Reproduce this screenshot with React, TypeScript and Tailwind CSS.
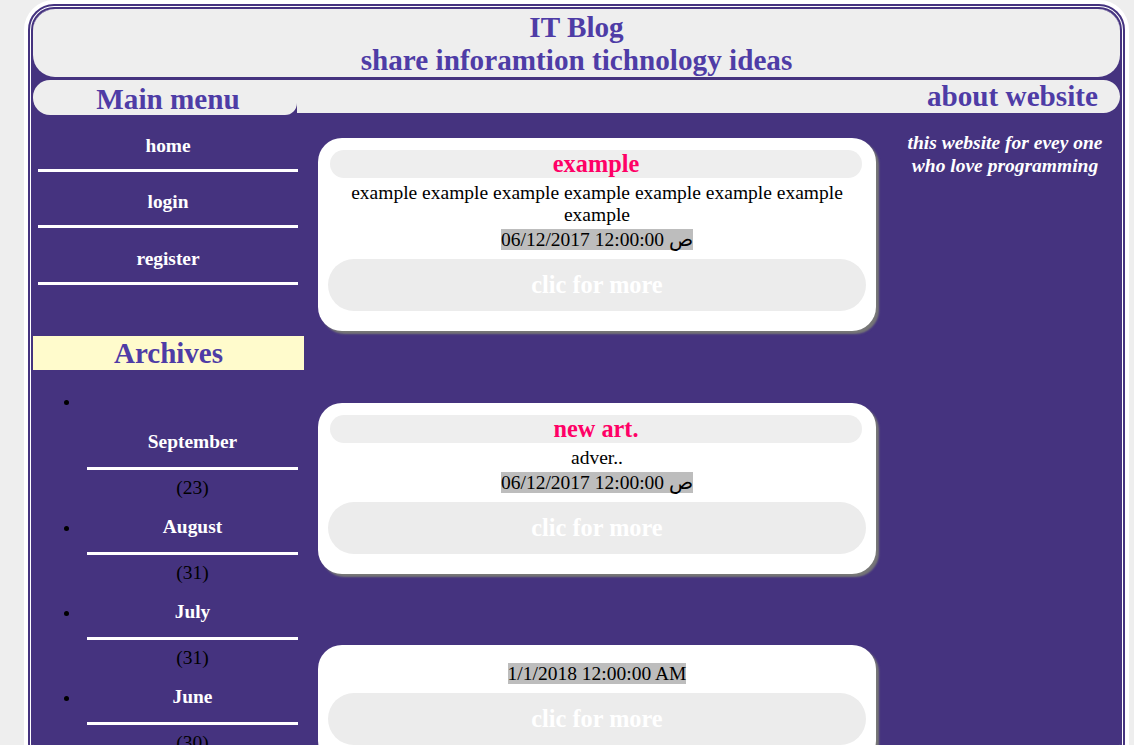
import React from "react";

type Post = {
  title?: string;
  body?: string;
  date: string;
};

const posts: Post[] = [
  {
    title: "example",
    body: "example example example example example example example example",
    date: "06/12/2017 12:00:00 ص",
  },
  { title: "new art.", body: "adver..", date: "06/12/2017 12:00:00 ص" },
  { date: "1/1/2018 12:00:00 AM" },
];

const menuLinks = ["home", "login", "register"];

const archives = [
  { month: "September", count: 23 },
  { month: "August", count: 31 },
  { month: "July", count: 31 },
  { month: "June", count: 30 },
];

const PostCard = ({ post }: { post: Post }) => {
  return (
    <div
      className={`rounded-[24px] bg-white px-[10px] pb-[20px] shadow-[3px_3px_2px_#777] ${
        post.title ? "pt-[12px]" : "pt-[15px]"
      }`}
    >
      {post.title && (
        <h3 className="ml-[2px] mr-[4px] h-[28px] rounded-full bg-[#eee] text-center text-[24.3px] font-bold leading-[28px] text-[#ff0066]">
          {post.title}
        </h3>
      )}
      {post.body && (
        <p className="mt-[4px] px-[8px] text-center text-[19.5px] leading-[22px] text-black">
          {post.body}
        </p>
      )}
      <div className="mt-[2px] text-center text-[19.5px] leading-[24px] text-black">
        <span className="bg-[#bdbdbd]">{post.date}</span>
      </div>
      <button className="mt-[7px] block h-[52px] w-full rounded-[26px] bg-[#ececec] text-center text-[24.3px] font-bold leading-[52px] text-white">
        clic for more
      </button>
    </div>
  );
};

const Sidebar = () => {
  return (
    <div className="w-[271px] shrink-0">
      <ul className="pl-[5px] pr-[6px]">
        {menuLinks.map((link) => (
          <li key={link}>
            <a className="block border-b-[3px] border-white pt-[19.5px] pb-[11.5px] text-center text-[19.4px] font-bold leading-[22.5px] text-white">
              {link}
            </a>
          </li>
        ))}
      </ul>

      <h2 className="mt-[51px] h-[34px] bg-[#fffbcc] text-center text-[29px] font-bold leading-[34px] text-[#4e3ca6]">
        Archives
      </h2>

      <ul className="mt-[19px] list-disc pl-[47px] pr-[6px] text-black">
        {archives.map((item, i) => (
          <li key={item.month} className="pl-[7px]">
            {i === 0 && <div className="leading-[25px]">&nbsp;</div>}
            <a className="block border-b-[3px] border-white pt-[17px] pb-[14px] text-center text-[19.4px] font-bold leading-[22px] text-white">
              {item.month}
            </a>
            <div className="pt-[7px] text-center text-[19.5px] leading-[22px]">
              ({item.count})
            </div>
          </li>
        ))}
      </ul>
    </div>
  );
};

const App = () => {
  return (
    <div className="min-h-screen bg-[#eee] font-['Liberation_Serif','DejaVu_Serif',serif]">
      <div className="ml-[24px] w-[1105px] rounded-[30px] border-[4px] border-white bg-white">
        <div className="min-h-[760px] rounded-[26px] border-[5px] border-double border-[#45337f] bg-[#45337f] bg-clip-padding">
          <header className="rounded-[22px] bg-[#eee] pt-[2px] text-center font-bold text-[#4e3ca6]">
            <h1 className="text-[29.2px] leading-[33px]">IT Blog</h1>
            <h2 className="text-[29.2px] leading-[33px]">
              share inforamtion tichnology ideas
            </h2>
          </header>

          <div className="mt-[3px] flex items-start">
            <div className="h-[35px] w-[264px] rounded-l-[17px] rounded-br-[12px] bg-[#eee] pt-[3px] pl-[6px] text-center text-[29.2px] font-bold leading-[32px] text-[#4e3ca6]">
              Main menu
            </div>
            <div className="h-[33px] flex-1 rounded-r-[17px] bg-[#eee] pr-[22px] text-right text-[29.2px] font-bold leading-[33px] text-[#4e3ca6]">
              about website
            </div>
          </div>

          <div className="flex items-start">
            <Sidebar />

            <main className="ml-[14px] mt-[23px] flex w-[558px] shrink-0 flex-col gap-[71.5px]">
              {posts.map((post, i) => (
                <PostCard key={i} post={post} />
              ))}
            </main>

            <aside className="flex-1 pl-[14px] pt-[16px] text-center text-[19.5px] font-bold italic leading-[23px] text-white">
              this website for evey one
              <br />
              who love programming
            </aside>
          </div>
        </div>
      </div>
    </div>
  );
};

export default App;
